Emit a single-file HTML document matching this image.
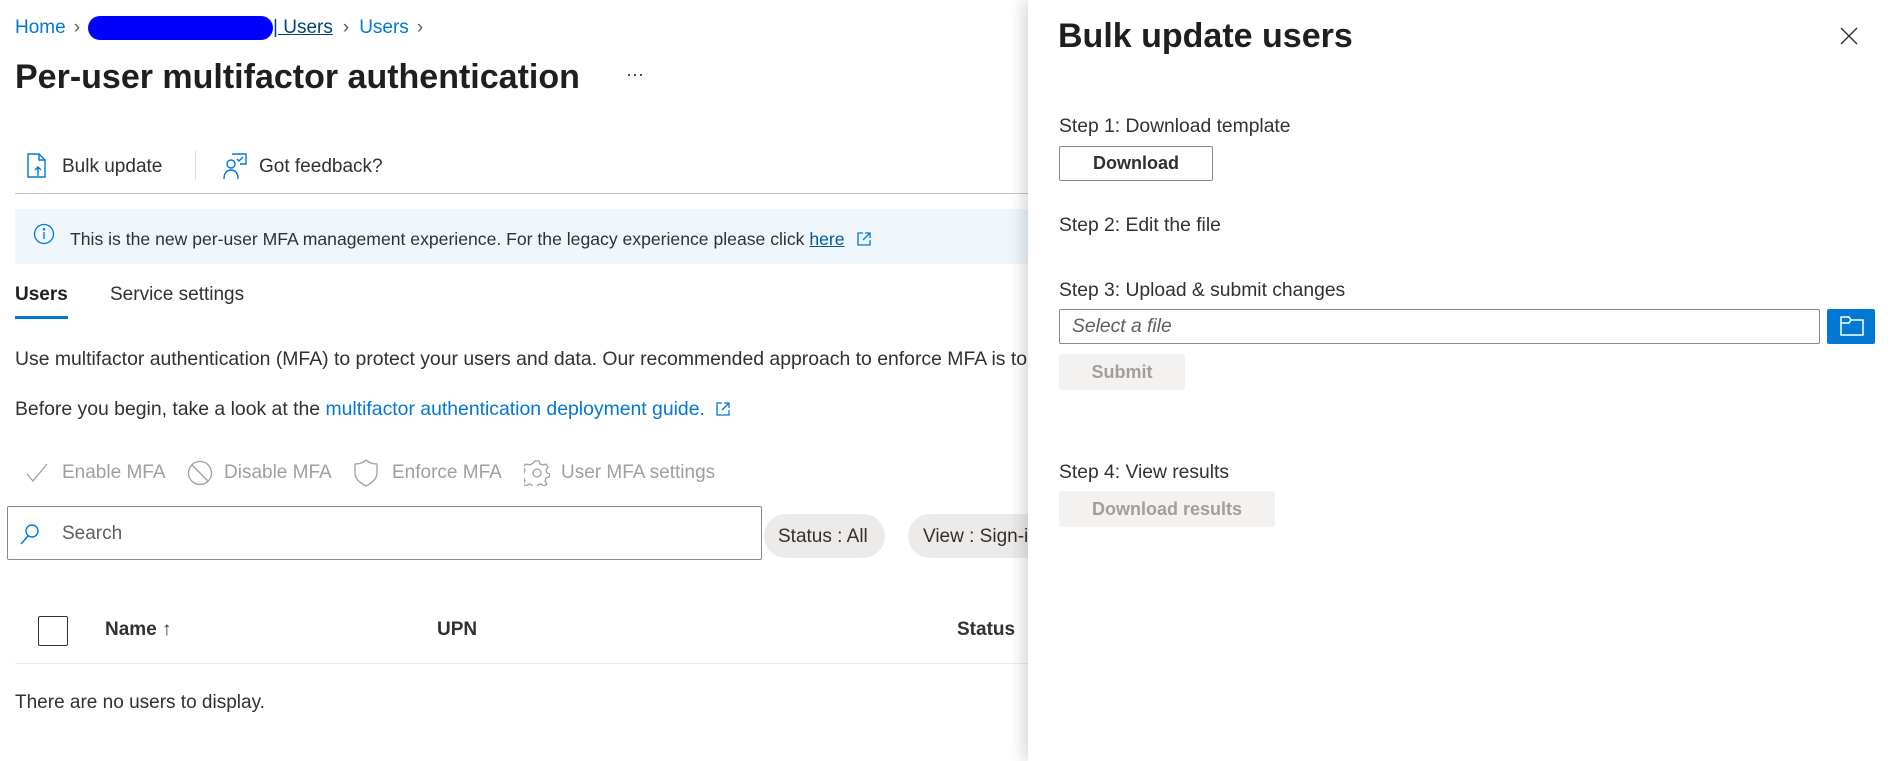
<!DOCTYPE html>
<html><head><meta charset="utf-8"><style>
*{margin:0;padding:0;box-sizing:border-box}
body{width:1904px;height:761px;overflow:hidden;background:#fff;font-family:"Liberation Sans",sans-serif;color:#323130;position:relative}
.a{position:absolute;white-space:nowrap}
.t{font-size:19.3px;line-height:22px}
.blue{color:#0078d4}
.g{color:#a19f9d}
</style></head><body>
<!-- breadcrumb -->
<div class="a t" style="left:15px;top:16px;font-size:19px">
<span class="blue">Home</span><span style="color:#605e5c;margin:0 8px">&#x203A;</span><span style="display:inline-block;width:185px;height:24px;background:#0000ff;border-radius:12px;vertical-align:middle"></span><span style="color:#004578;text-decoration:underline">| Users</span><span style="color:#605e5c;margin:0 10px">&#x203A;</span><span class="blue">Users</span><span style="color:#605e5c;margin:0 8px">&#x203A;</span></div>
<div class="a" style="left:15px;top:57px;font-size:34px;line-height:40px;font-weight:600;color:#201f1e">Per-user multifactor authentication</div>
<div class="a" style="left:626px;top:64px;font-size:18px">···</div>
<!-- toolbar -->
<svg class="a" style="left:26px;top:153px" width="22" height="26" viewBox="0 0 22 26" fill="none" stroke="#0078d4" stroke-width="1.4"><path d="M2 1h11l6 6v17H2z"/><path d="M13 1v6h6"/><path d="M12 23v-9m-3 3 3-3 3 3"/></svg>
<div class="a t" style="left:62px;top:156px;font-size:19px">Bulk update</div>
<div class="a" style="left:195px;top:150px;width:1px;height:30px;background:#e1dfdd"></div>
<svg class="a" style="left:222px;top:152px" width="26" height="28" viewBox="0 0 26 28" fill="none" stroke="#0078d4" stroke-width="1.4"><circle cx="9" cy="12" r="4"/><path d="M2 27c0-6 3-9 7-9s7 3 7 9"/><path d="M10 2h14v10h-6"/><path d="M15 7l2 2 4-4"/></svg>
<div class="a t" style="left:259px;top:156px;font-size:19px">Got feedback?</div>
<div class="a" style="left:15px;top:193px;width:1020px;height:1px;background:#c8c6c4"></div>
<!-- banner -->
<div class="a" style="left:15px;top:209px;width:1020px;height:55px;background:#eff6fc"></div>
<svg class="a" style="left:33px;top:223px" width="22" height="22" viewBox="0 0 22 22" fill="none" stroke="#0078d4" stroke-width="1.3"><circle cx="11" cy="11" r="9.5"/><path d="M11 9v7"/><circle cx="11" cy="6.3" r=".6" fill="#0078d4"/></svg>
<div class="a" style="left:70px;top:228px;font-size:17.6px;line-height:22px">This is the new per-user MFA management experience. For the legacy experience please click <span style="color:#005a9e;text-decoration:underline">here</span>
<svg width="14" height="14" viewBox="0 0 14 14" fill="none" stroke="#0078d4" stroke-width="1.3" style="margin-left:8px;vertical-align:-1px"><path d="M6 1H1v12h12V8M8 1h5v5M13 1 6 8"/></svg></div>
<!-- tabs -->
<div class="a" style="left:15px;top:284px;font-size:19px;line-height:22px;color:#201f1e;font-weight:600">Users</div>
<div class="a" style="left:15px;top:316px;width:53px;height:3px;background:#0078d4"></div>
<div class="a" style="left:110px;top:284px;font-size:19px;line-height:22px">Service settings</div>
<div class="a" style="left:15px;top:348px;font-size:19.4px;line-height:22px">Use multifactor authentication (MFA) to protect your users and data. Our recommended approach to enforce MFA is to</div>
<div class="a" style="left:15px;top:398px;font-size:19.4px;line-height:22px">Before you begin, take a look at the <span class="blue">multifactor authentication deployment guide.</span>
<svg width="14" height="14" viewBox="0 0 14 14" fill="none" stroke="#0078d4" stroke-width="1.3" style="margin-left:6px;vertical-align:-1px"><path d="M6 1H1v12h12V8M8 1h5v5M13 1 6 8"/></svg></div>
<!-- actions -->
<svg class="a" style="left:26px;top:463px" width="22" height="20" viewBox="0 0 22 20" fill="none" stroke="#a19f9d" stroke-width="1.3"><path d="M1 11l6 7L21 1"/></svg>
<div class="a t g" style="left:62px;top:462px;font-size:19px">Enable MFA</div>
<svg class="a" style="left:187px;top:460px" width="26" height="26" viewBox="0 0 26 26" fill="none" stroke="#a19f9d" stroke-width="1.3"><circle cx="13" cy="13" r="11.5"/><path d="M5 5l16 16"/></svg>
<div class="a t g" style="left:224px;top:462px;font-size:19px">Disable MFA</div>
<svg class="a" style="left:354px;top:459px" width="24" height="28" viewBox="0 0 24 28" fill="none" stroke="#a19f9d" stroke-width="1.3"><path d="M12 1c3 3 7 4 11 4v9c0 6-5 10-11 13C6 24 1 20 1 14V5c4 0 8-1 11-4z"/></svg>
<div class="a t g" style="left:392px;top:462px;font-size:19px">Enforce MFA</div>
<svg class="a" style="left:524px;top:460px" width="26" height="26" viewBox="0 0 26 26" fill="none" stroke="#a19f9d" stroke-width="1.3"><circle cx="13" cy="13" r="4"/><path d="M11 1h4l1 3 3 1 3-1 2 3-2 3 1 3 3 1v0l-1 3-3 1-1 3 2 3-3 2-3-2-3 1-1 3h-4l-1-3-3-1-3 2-3-2 2-3-1-3-3-1v-3l3-1 1-3-2-3 3-3 3 1 3-1z"/></svg>
<div class="a t g" style="left:561px;top:462px;font-size:19px">User MFA settings</div>
<!-- search -->
<div class="a" style="left:7px;top:506px;width:755px;height:54px;border:1px solid #8a8886;border-radius:2px"></div>
<svg class="a" style="left:20px;top:523px" width="20" height="22" viewBox="0 0 20 22" fill="none" stroke="#0078d4" stroke-width="1.4"><circle cx="12" cy="8" r="6"/><path d="M8 13 1 21"/></svg>
<div class="a t" style="left:62px;top:523px;font-size:19px;color:#605e5c">Search</div>
<div class="a" style="left:764px;top:514px;width:121px;height:44px;background:#edebe9;border-radius:22px"></div>
<div class="a t" style="left:778px;top:526px;font-size:19px">Status : All</div>
<div class="a" style="left:908px;top:514px;width:200px;height:44px;background:#edebe9;border-radius:22px"></div>
<div class="a t" style="left:923px;top:526px;font-size:19px">View : Sign-in</div>
<!-- table -->
<div class="a" style="left:38px;top:616px;width:30px;height:30px;border:1px solid #323130;border-radius:2px"></div>
<div class="a t" style="left:105px;top:619px;font-size:19px;font-weight:600">Name <span style="font-weight:400">&#x2191;</span></div>
<div class="a t" style="left:437px;top:619px;font-size:19px;font-weight:600">UPN</div>
<div class="a t" style="left:957px;top:619px;font-size:19px;font-weight:600">Status</div>
<div class="a" style="left:15px;top:663px;width:1020px;height:1px;background:#edebe9"></div>
<div class="a t" style="left:15px;top:692px;font-size:19px">There are no users to display.</div>
<!-- panel -->
<div class="a" style="left:1028px;top:0;width:876px;height:761px;background:#fff;box-shadow:-6px 0 14px rgba(0,0,0,.14)"></div>
<div class="a" style="left:1058px;top:16px;font-size:34px;line-height:40px;font-weight:600;color:#201f1e">Bulk update users</div>
<svg class="a" style="left:1840px;top:27px" width="18" height="18" viewBox="0 0 18 18" stroke="#323130" stroke-width="1.4"><path d="M1 1l16 16M17 1 1 17"/></svg>
<div class="a t" style="left:1059px;top:116px">Step 1: Download template</div>
<div class="a" style="left:1059px;top:146px;width:154px;height:35px;border:1px solid #8a8886;border-radius:2px;font-size:18px;font-weight:600;text-align:center;line-height:33px">Download</div>
<div class="a t" style="left:1059px;top:215px">Step 2: Edit the file</div>
<div class="a t" style="left:1059px;top:280px">Step 3: Upload &amp; submit changes</div>
<div class="a" style="left:1059px;top:309px;width:761px;height:35px;border:1px solid #8a8886;border-radius:2px"></div>
<div class="a t" style="left:1072px;top:316px;font-style:italic;color:#605e5c">Select a file</div>
<div class="a" style="left:1827px;top:309px;width:48px;height:35px;background:#0078d4;border-radius:2px"></div>
<svg class="a" style="left:1840px;top:316px" width="24" height="20" viewBox="0 0 24 20" fill="none" stroke="#fff" stroke-width="1.5"><path d="M1 1h8l2 3h12v15H1z"/><path d="M1 7h8l2-3"/></svg>
<div class="a" style="left:1059px;top:354px;width:126px;height:36px;background:#f3f2f1;border-radius:2px;font-size:18px;font-weight:600;text-align:center;line-height:36px;color:#a19f9d">Submit</div>
<div class="a t" style="left:1059px;top:462px">Step 4: View results</div>
<div class="a" style="left:1059px;top:491px;width:216px;height:36px;background:#f3f2f1;border-radius:2px;font-size:18px;font-weight:600;text-align:center;line-height:36px;color:#a19f9d">Download results</div>
</body></html>
